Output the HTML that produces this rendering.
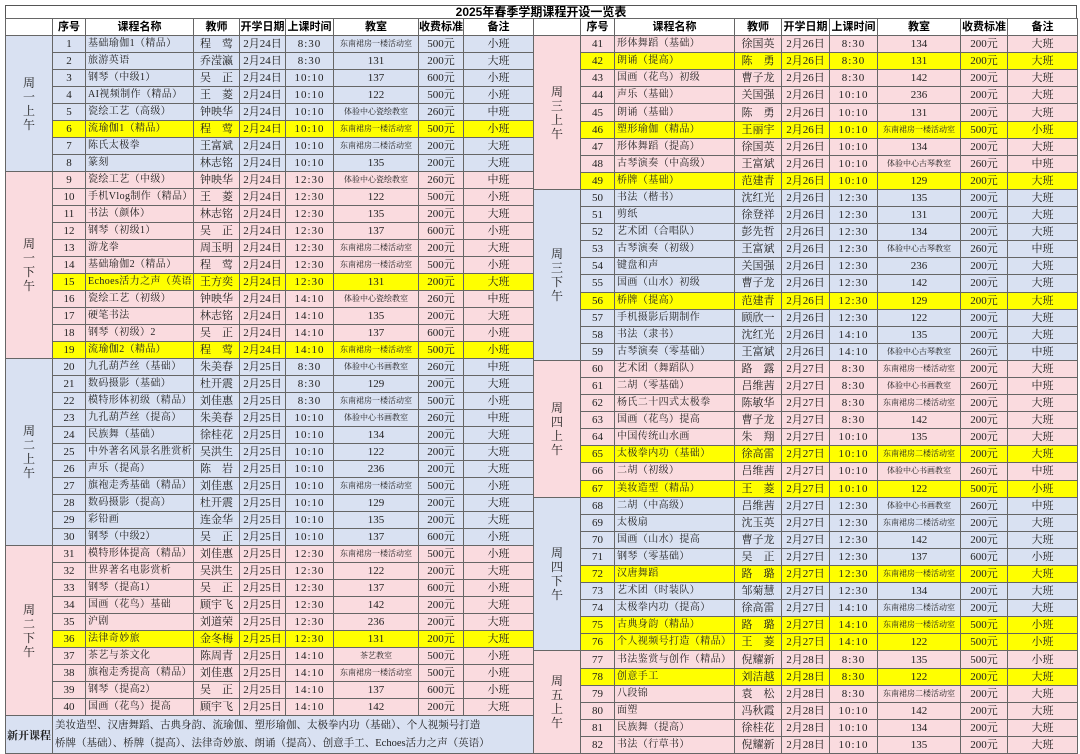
<!DOCTYPE html>
<html><head><meta charset="utf-8"><style>
html,body{margin:0;padding:0;background:#fff;width:1080px;height:754px;overflow:hidden}
.title{position:absolute;left:5px;top:5px;width:1072px;height:13px;border:1px solid #555;border-bottom:none;box-sizing:border-box;font:bold 12px/12px "Liberation Sans","Noto Sans CJK SC",sans-serif;text-align:center;color:#000}
table{position:absolute;top:18px;border-collapse:collapse;table-layout:fixed}
td{border:1px solid #666;padding:0;text-align:center;vertical-align:middle;white-space:nowrap;overflow:hidden;font:11px/14px "Liberation Serif","Noto Serif CJK SC",serif;color:#222}
tr.h td{font:bold 11px/14px "Liberation Sans","Noto Sans CJK SC",sans-serif;color:#000;background:#fff;height:14px}
#L tr{height:17px}
#R tr{height:17.1px}
tr.b td{background:#d9e1f2}
tr.p td{background:#fadbdf}
tr.y td{background:#ffff00}
td.gb{background:#d9e1f2!important;font-size:12px;line-height:14px}
td.gp{background:#fadbdf!important;font-size:12px;line-height:14px}
td.n{text-align:left;padding-left:2px;font-size:10px;letter-spacing:0.4px}
td.s{font-size:8px}
td.t{letter-spacing:1px}
tr.nb td{background:#d9e1f2;height:37px}
td.gl{font:bold 11px/14px "Noto Serif CJK SC",serif}
td.nt{text-align:left;padding-left:2px;font-size:10.5px;line-height:18px}
</style></head><body>
<div class="title">2025年春季学期课程开设一览表</div>
<table id="L" style="left:5px;width:528px">
<colgroup><col style="width:47px"><col style="width:33px"><col style="width:108px"><col style="width:46px"><col style="width:46px"><col style="width:48px"><col style="width:85px"><col style="width:45px"><col style="width:70px"></colgroup>
<tr class="h"><td></td><td>序号</td><td>课程名称</td><td>教师</td><td>开学日期</td><td>上课时间</td><td>教室</td><td>收费标准</td><td>备注</td></tr>
<tr class="b"><td class="gb" rowspan="8">周<br>一<br>上<br>午</td><td>1</td><td class="n">基础瑜伽1（精品）</td><td>程　莺</td><td>2月24日</td><td class="t">8:30</td><td class="s">东南裙房一楼活动室</td><td>500元</td><td>小班</td></tr>
<tr class="b"><td>2</td><td class="n">旅游英语</td><td>乔滢瀛</td><td>2月24日</td><td class="t">8:30</td><td>131</td><td>200元</td><td>大班</td></tr>
<tr class="b"><td>3</td><td class="n">钢琴（中级1）</td><td>吴　正</td><td>2月24日</td><td class="t">10:10</td><td>137</td><td>600元</td><td>小班</td></tr>
<tr class="b"><td>4</td><td class="n">AI视频制作（精品）</td><td>王　菱</td><td>2月24日</td><td class="t">10:10</td><td>122</td><td>500元</td><td>小班</td></tr>
<tr class="b"><td>5</td><td class="n">瓷绘工艺（高级）</td><td>钟映华</td><td>2月24日</td><td class="t">10:10</td><td class="s">体验中心瓷绘教室</td><td>260元</td><td>中班</td></tr>
<tr class="y"><td>6</td><td class="n">流瑜伽1（精品）</td><td>程　莺</td><td>2月24日</td><td class="t">10:10</td><td class="s">东南裙房一楼活动室</td><td>500元</td><td>小班</td></tr>
<tr class="b"><td>7</td><td class="n">陈氏太极拳</td><td>王富斌</td><td>2月24日</td><td class="t">10:10</td><td class="s">东南裙房二楼活动室</td><td>200元</td><td>大班</td></tr>
<tr class="b"><td>8</td><td class="n">篆刻</td><td>林志铭</td><td>2月24日</td><td class="t">10:10</td><td>135</td><td>200元</td><td>大班</td></tr>
<tr class="p"><td class="gp" rowspan="11">周<br>一<br>下<br>午</td><td>9</td><td class="n">瓷绘工艺（中级）</td><td>钟映华</td><td>2月24日</td><td class="t">12:30</td><td class="s">体验中心瓷绘教室</td><td>260元</td><td>中班</td></tr>
<tr class="p"><td>10</td><td class="n">手机Vlog制作（精品）</td><td>王　菱</td><td>2月24日</td><td class="t">12:30</td><td>122</td><td>500元</td><td>小班</td></tr>
<tr class="p"><td>11</td><td class="n">书法（颜体）</td><td>林志铭</td><td>2月24日</td><td class="t">12:30</td><td>135</td><td>200元</td><td>大班</td></tr>
<tr class="p"><td>12</td><td class="n">钢琴（初级1）</td><td>吴　正</td><td>2月24日</td><td class="t">12:30</td><td>137</td><td>600元</td><td>小班</td></tr>
<tr class="p"><td>13</td><td class="n">游龙拳</td><td>周玉明</td><td>2月24日</td><td class="t">12:30</td><td class="s">东南裙房二楼活动室</td><td>200元</td><td>大班</td></tr>
<tr class="p"><td>14</td><td class="n">基础瑜伽2（精品）</td><td>程　莺</td><td>2月24日</td><td class="t">12:30</td><td class="s">东南裙房一楼活动室</td><td>500元</td><td>小班</td></tr>
<tr class="y"><td>15</td><td class="n">Echoes活力之声（英语</td><td>王方奕</td><td>2月24日</td><td class="t">12:30</td><td>131</td><td>200元</td><td>大班</td></tr>
<tr class="p"><td>16</td><td class="n">瓷绘工艺（初级）</td><td>钟映华</td><td>2月24日</td><td class="t">14:10</td><td class="s">体验中心瓷绘教室</td><td>260元</td><td>中班</td></tr>
<tr class="p"><td>17</td><td class="n">硬笔书法</td><td>林志铭</td><td>2月24日</td><td class="t">14:10</td><td>135</td><td>200元</td><td>大班</td></tr>
<tr class="p"><td>18</td><td class="n">钢琴（初级）2</td><td>吴　正</td><td>2月24日</td><td class="t">14:10</td><td>137</td><td>600元</td><td>小班</td></tr>
<tr class="y"><td>19</td><td class="n">流瑜伽2（精品）</td><td>程　莺</td><td>2月24日</td><td class="t">14:10</td><td class="s">东南裙房一楼活动室</td><td>500元</td><td>小班</td></tr>
<tr class="b"><td class="gb" rowspan="11">周<br>二<br>上<br>午</td><td>20</td><td class="n">九孔葫芦丝（基础）</td><td>朱美春</td><td>2月25日</td><td class="t">8:30</td><td class="s">体验中心书画教室</td><td>260元</td><td>中班</td></tr>
<tr class="b"><td>21</td><td class="n">数码摄影（基础）</td><td>杜开震</td><td>2月25日</td><td class="t">8:30</td><td>129</td><td>200元</td><td>大班</td></tr>
<tr class="b"><td>22</td><td class="n">模特形体初级（精品）</td><td>刘佳惠</td><td>2月25日</td><td class="t">8:30</td><td class="s">东南裙房一楼活动室</td><td>500元</td><td>小班</td></tr>
<tr class="b"><td>23</td><td class="n">九孔葫芦丝（提高）</td><td>朱美春</td><td>2月25日</td><td class="t">10:10</td><td class="s">体验中心书画教室</td><td>260元</td><td>中班</td></tr>
<tr class="b"><td>24</td><td class="n">民族舞（基础）</td><td>徐桂花</td><td>2月25日</td><td class="t">10:10</td><td>134</td><td>200元</td><td>大班</td></tr>
<tr class="b"><td>25</td><td class="n">中外著名风景名胜赏析</td><td>吴洪生</td><td>2月25日</td><td class="t">10:10</td><td>122</td><td>200元</td><td>大班</td></tr>
<tr class="b"><td>26</td><td class="n">声乐（提高）</td><td>陈　岩</td><td>2月25日</td><td class="t">10:10</td><td>236</td><td>200元</td><td>大班</td></tr>
<tr class="b"><td>27</td><td class="n">旗袍走秀基础（精品）</td><td>刘佳惠</td><td>2月25日</td><td class="t">10:10</td><td class="s">东南裙房一楼活动室</td><td>500元</td><td>小班</td></tr>
<tr class="b"><td>28</td><td class="n">数码摄影（提高）</td><td>杜开震</td><td>2月25日</td><td class="t">10:10</td><td>129</td><td>200元</td><td>大班</td></tr>
<tr class="b"><td>29</td><td class="n">彩铅画</td><td>连金华</td><td>2月25日</td><td class="t">10:10</td><td>135</td><td>200元</td><td>大班</td></tr>
<tr class="b"><td>30</td><td class="n">钢琴（中级2）</td><td>吴　正</td><td>2月25日</td><td class="t">10:10</td><td>137</td><td>600元</td><td>小班</td></tr>
<tr class="p"><td class="gp" rowspan="10">周<br>二<br>下<br>午</td><td>31</td><td class="n">模特形体提高（精品）</td><td>刘佳惠</td><td>2月25日</td><td class="t">12:30</td><td class="s">东南裙房一楼活动室</td><td>500元</td><td>小班</td></tr>
<tr class="p"><td>32</td><td class="n">世界著名电影赏析</td><td>吴洪生</td><td>2月25日</td><td class="t">12:30</td><td>122</td><td>200元</td><td>大班</td></tr>
<tr class="p"><td>33</td><td class="n">钢琴（提高1）</td><td>吴　正</td><td>2月25日</td><td class="t">12:30</td><td>137</td><td>600元</td><td>小班</td></tr>
<tr class="p"><td>34</td><td class="n">国画（花鸟）基础</td><td>顾宇飞</td><td>2月25日</td><td class="t">12:30</td><td>142</td><td>200元</td><td>大班</td></tr>
<tr class="p"><td>35</td><td class="n">沪剧</td><td>刘道荣</td><td>2月25日</td><td class="t">12:30</td><td>236</td><td>200元</td><td>大班</td></tr>
<tr class="y"><td>36</td><td class="n">法律奇妙旅</td><td>金冬梅</td><td>2月25日</td><td class="t">12:30</td><td>131</td><td>200元</td><td>大班</td></tr>
<tr class="p"><td>37</td><td class="n">茶艺与茶文化</td><td>陈周青</td><td>2月25日</td><td class="t">14:10</td><td class="s">茶艺教室</td><td>500元</td><td>小班</td></tr>
<tr class="p"><td>38</td><td class="n">旗袍走秀提高（精品）</td><td>刘佳惠</td><td>2月25日</td><td class="t">14:10</td><td class="s">东南裙房一楼活动室</td><td>500元</td><td>小班</td></tr>
<tr class="p"><td>39</td><td class="n">钢琴（提高2）</td><td>吴　正</td><td>2月25日</td><td class="t">14:10</td><td>137</td><td>600元</td><td>小班</td></tr>
<tr class="p"><td>40</td><td class="n">国画（花鸟）提高</td><td>顾宇飞</td><td>2月25日</td><td class="t">14:10</td><td>142</td><td>200元</td><td>大班</td></tr>
<tr class="nb"><td class="gl">新开课程</td><td class="nt" colspan="8">美妆造型、汉唐舞蹈、古典身韵、流瑜伽、塑形瑜伽、太极拳内功（基础）、个人视频号打造<br>桥牌（基础）、桥牌（提高）、法律奇妙旅、朗诵（提高）、创意手工、Echoes活力之声（英语）</td></tr>
</table>

<table id="R" style="left:533px;width:544px">
<colgroup><col style="width:47px"><col style="width:34px"><col style="width:120px"><col style="width:47px"><col style="width:48px"><col style="width:48px"><col style="width:83px"><col style="width:47px"><col style="width:70px"></colgroup>
<tr class="h"><td></td><td>序号</td><td>课程名称</td><td>教师</td><td>开学日期</td><td>上课时间</td><td>教室</td><td>收费标准</td><td>备注</td></tr>
<tr class="p"><td class="gp" rowspan="9">周<br>三<br>上<br>午</td><td>41</td><td class="n">形体舞蹈（基础）</td><td>徐国英</td><td>2月26日</td><td class="t">8:30</td><td>134</td><td>200元</td><td>大班</td></tr>
<tr class="y"><td>42</td><td class="n">朗诵（提高）</td><td>陈　勇</td><td>2月26日</td><td class="t">8:30</td><td>131</td><td>200元</td><td>大班</td></tr>
<tr class="p"><td>43</td><td class="n">国画（花鸟）初级</td><td>曹子龙</td><td>2月26日</td><td class="t">8:30</td><td>142</td><td>200元</td><td>大班</td></tr>
<tr class="p"><td>44</td><td class="n">声乐（基础）</td><td>关国强</td><td>2月26日</td><td class="t">10:10</td><td>236</td><td>200元</td><td>大班</td></tr>
<tr class="p"><td>45</td><td class="n">朗诵（基础）</td><td>陈　勇</td><td>2月26日</td><td class="t">10:10</td><td>131</td><td>200元</td><td>大班</td></tr>
<tr class="y"><td>46</td><td class="n">塑形瑜伽（精品）</td><td>王丽宇</td><td>2月26日</td><td class="t">10:10</td><td class="s">东南裙房一楼活动室</td><td>500元</td><td>小班</td></tr>
<tr class="p"><td>47</td><td class="n">形体舞蹈（提高）</td><td>徐国英</td><td>2月26日</td><td class="t">10:10</td><td>134</td><td>200元</td><td>大班</td></tr>
<tr class="p"><td>48</td><td class="n">古琴演奏（中高级）</td><td>王富斌</td><td>2月26日</td><td class="t">10:10</td><td class="s">体验中心古琴教室</td><td>260元</td><td>中班</td></tr>
<tr class="y"><td>49</td><td class="n">桥牌（基础）</td><td>范建青</td><td>2月26日</td><td class="t">10:10</td><td>129</td><td>200元</td><td>大班</td></tr>
<tr class="b"><td class="gb" rowspan="10">周<br>三<br>下<br>午</td><td>50</td><td class="n">书法（楷书）</td><td>沈红光</td><td>2月26日</td><td class="t">12:30</td><td>135</td><td>200元</td><td>大班</td></tr>
<tr class="b"><td>51</td><td class="n">剪纸</td><td>徐登祥</td><td>2月26日</td><td class="t">12:30</td><td>131</td><td>200元</td><td>大班</td></tr>
<tr class="b"><td>52</td><td class="n">艺术团（合唱队）</td><td>彭先哲</td><td>2月26日</td><td class="t">12:30</td><td>134</td><td>200元</td><td>大班</td></tr>
<tr class="b"><td>53</td><td class="n">古琴演奏（初级）</td><td>王富斌</td><td>2月26日</td><td class="t">12:30</td><td class="s">体验中心古琴教室</td><td>260元</td><td>中班</td></tr>
<tr class="b"><td>54</td><td class="n">键盘和声</td><td>关国强</td><td>2月26日</td><td class="t">12:30</td><td>236</td><td>200元</td><td>大班</td></tr>
<tr class="b"><td>55</td><td class="n">国画（山水）初级</td><td>曹子龙</td><td>2月26日</td><td class="t">12:30</td><td>142</td><td>200元</td><td>大班</td></tr>
<tr class="y"><td>56</td><td class="n">桥牌（提高）</td><td>范建青</td><td>2月26日</td><td class="t">12:30</td><td>129</td><td>200元</td><td>大班</td></tr>
<tr class="b"><td>57</td><td class="n">手机摄影后期制作</td><td>顾欣一</td><td>2月26日</td><td class="t">12:30</td><td>122</td><td>200元</td><td>大班</td></tr>
<tr class="b"><td>58</td><td class="n">书法（隶书）</td><td>沈红光</td><td>2月26日</td><td class="t">14:10</td><td>135</td><td>200元</td><td>大班</td></tr>
<tr class="b"><td>59</td><td class="n">古琴演奏（零基础）</td><td>王富斌</td><td>2月26日</td><td class="t">14:10</td><td class="s">体验中心古琴教室</td><td>260元</td><td>中班</td></tr>
<tr class="p"><td class="gp" rowspan="8">周<br>四<br>上<br>午</td><td>60</td><td class="n">艺术团（舞蹈队）</td><td>路　露</td><td>2月27日</td><td class="t">8:30</td><td class="s">东南裙房一楼活动室</td><td>200元</td><td>大班</td></tr>
<tr class="p"><td>61</td><td class="n">二胡（零基础）</td><td>吕维茜</td><td>2月27日</td><td class="t">8:30</td><td class="s">体验中心书画教室</td><td>260元</td><td>中班</td></tr>
<tr class="p"><td>62</td><td class="n">杨氏二十四式太极拳</td><td>陈敏华</td><td>2月27日</td><td class="t">8:30</td><td class="s">东南裙房二楼活动室</td><td>200元</td><td>大班</td></tr>
<tr class="p"><td>63</td><td class="n">国画（花鸟）提高</td><td>曹子龙</td><td>2月27日</td><td class="t">8:30</td><td>142</td><td>200元</td><td>大班</td></tr>
<tr class="p"><td>64</td><td class="n">中国传统山水画</td><td>朱　翔</td><td>2月27日</td><td class="t">10:10</td><td>135</td><td>200元</td><td>大班</td></tr>
<tr class="y"><td>65</td><td class="n">太极拳内功（基础）</td><td>徐高雷</td><td>2月27日</td><td class="t">10:10</td><td class="s">东南裙房二楼活动室</td><td>200元</td><td>大班</td></tr>
<tr class="p"><td>66</td><td class="n">二胡（初级）</td><td>吕维茜</td><td>2月27日</td><td class="t">10:10</td><td class="s">体验中心书画教室</td><td>260元</td><td>中班</td></tr>
<tr class="y"><td>67</td><td class="n">美妆造型（精品）</td><td>王　菱</td><td>2月27日</td><td class="t">10:10</td><td>122</td><td>500元</td><td>小班</td></tr>
<tr class="b"><td class="gb" rowspan="9">周<br>四<br>下<br>午</td><td>68</td><td class="n">二胡（中高级）</td><td>吕维茜</td><td>2月27日</td><td class="t">12:30</td><td class="s">体验中心书画教室</td><td>260元</td><td>中班</td></tr>
<tr class="b"><td>69</td><td class="n">太极扇</td><td>沈玉英</td><td>2月27日</td><td class="t">12:30</td><td class="s">东南裙房二楼活动室</td><td>200元</td><td>大班</td></tr>
<tr class="b"><td>70</td><td class="n">国画（山水）提高</td><td>曹子龙</td><td>2月27日</td><td class="t">12:30</td><td>142</td><td>200元</td><td>大班</td></tr>
<tr class="b"><td>71</td><td class="n">钢琴（零基础）</td><td>吴　正</td><td>2月27日</td><td class="t">12:30</td><td>137</td><td>600元</td><td>小班</td></tr>
<tr class="y"><td>72</td><td class="n">汉唐舞蹈</td><td>路　璐</td><td>2月27日</td><td class="t">12:30</td><td class="s">东南裙房一楼活动室</td><td>200元</td><td>大班</td></tr>
<tr class="b"><td>73</td><td class="n">艺术团（时装队）</td><td>邹菊慧</td><td>2月27日</td><td class="t">12:30</td><td>134</td><td>200元</td><td>大班</td></tr>
<tr class="b"><td>74</td><td class="n">太极拳内功（提高）</td><td>徐高雷</td><td>2月27日</td><td class="t">14:10</td><td class="s">东南裙房二楼活动室</td><td>200元</td><td>大班</td></tr>
<tr class="y"><td>75</td><td class="n">古典身韵（精品）</td><td>路　璐</td><td>2月27日</td><td class="t">14:10</td><td class="s">东南裙房一楼活动室</td><td>500元</td><td>小班</td></tr>
<tr class="y"><td>76</td><td class="n">个人视频号打造（精品）</td><td>王　菱</td><td>2月27日</td><td class="t">14:10</td><td>122</td><td>500元</td><td>小班</td></tr>
<tr class="p"><td class="gp" rowspan="6">周<br>五<br>上<br>午</td><td>77</td><td class="n">书法鉴赏与创作（精品）</td><td>倪耀新</td><td>2月28日</td><td class="t">8:30</td><td>135</td><td>500元</td><td>小班</td></tr>
<tr class="y"><td>78</td><td class="n">创意手工</td><td>刘洁越</td><td>2月28日</td><td class="t">8:30</td><td>122</td><td>200元</td><td>大班</td></tr>
<tr class="p"><td>79</td><td class="n">八段锦</td><td>袁　松</td><td>2月28日</td><td class="t">8:30</td><td class="s">东南裙房二楼活动室</td><td>200元</td><td>大班</td></tr>
<tr class="p"><td>80</td><td class="n">面塑</td><td>冯秋霞</td><td>2月28日</td><td class="t">10:10</td><td>142</td><td>200元</td><td>大班</td></tr>
<tr class="p"><td>81</td><td class="n">民族舞（提高）</td><td>徐桂花</td><td>2月28日</td><td class="t">10:10</td><td>134</td><td>200元</td><td>大班</td></tr>
<tr class="p"><td>82</td><td class="n">书法（行草书）</td><td>倪耀新</td><td>2月28日</td><td class="t">10:10</td><td>135</td><td>200元</td><td>大班</td></tr>
</table>
</body></html>
